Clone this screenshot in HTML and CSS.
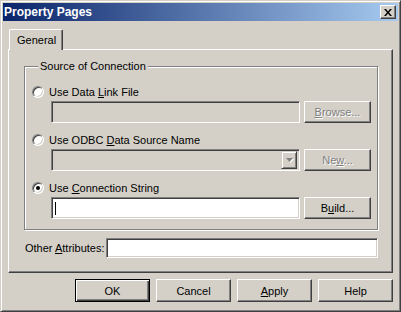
FILE: index.html
```html
<html>

<head>
    <link rel="stylesheet" href="styles.css">
    <title>Property Pages</title>
</head>

<body>
    <div class="window">
        <div class="titlebar">
            <span class="title">Property Pages</span>
            <div class="close">
                <svg width="8" height="7" viewBox="0 0 8 7">
                    <path d="M0 0h2l2 2.4 2-2.4h2l-3 3.5 3 3.5h-2l-2-2.4-2 2.4h-2l3-3.5z" fill="#000" />
                </svg>
            </div>
        </div>
        <div class="content">
            <div class="tabs">
                <div class="tab">General</div>
            </div>
            <div class="panel">
                <fieldset class="group">
                    <legend>Source of Connection</legend>
                    <div class="option">
                        <div class="radio-row">
                            <span class="radio"></span>
                            <span>Use Data <u>L</u>ink File</span>
                        </div>
                        <div class="field-row">
                            <div class="edit disabled"></div>
                            <div class="btn disabled"><span><u>B</u>rowse...</span></div>
                        </div>
                    </div>
                    <div class="option">
                        <div class="radio-row">
                            <span class="radio"></span>
                            <span>Use ODBC <u>D</u>ata Source Name</span>
                        </div>
                        <div class="field-row">
                            <div class="edit disabled combo">
                                <div class="drop">
                                    <svg width="9" height="6" viewBox="0 0 9 6">
                                        <path d="M2 2h7l-3.5 4z" fill="#fff" />
                                        <path d="M1 1h7l-3.5 4z" fill="#808080" />
                                    </svg>
                                </div>
                            </div>
                            <div class="btn disabled"><span>Ne<u>w</u>...</span></div>
                        </div>
                    </div>
                    <div class="option">
                        <div class="radio-row">
                            <span class="radio checked"></span>
                            <span>Use <u>C</u>onnection String</span>
                        </div>
                        <div class="field-row">
                            <div class="edit"><span class="caret"></span></div>
                            <div class="btn"><span>B<u>u</u>ild...</span></div>
                        </div>
                    </div>
                </fieldset>
                <div class="attr-row">
                    <span class="attr-label">Other <u>A</u>ttributes:</span>
                    <div class="edit attr-edit"></div>
                </div>
            </div>
            <div class="actions">
                <div class="btn wide default">OK</div>
                <div class="btn wide">Cancel</div>
                <div class="btn wide"><span><u>A</u>pply</span></div>
                <div class="btn wide">Help</div>
            </div>
        </div>
    </div>
</body>

</html>
```

FILE: styles.css
```css
* {
    box-sizing: border-box;
}

body {
    margin: 0;
    padding: 0;
    overflow: hidden;
    background-color: #d4d0c8;
    font-family: "Liberation Sans", Arial, sans-serif;
    font-size: 11px;
    color: #000;
    user-select: none;
}

u {
    text-decoration: underline;
    text-underline-offset: 1px;
}

.window {
    width: 401px;
    height: 312px;
    border: 1px solid;
    border-color: #d4d0c8 #404040 #404040 #d4d0c8;
    box-shadow: inset 1px 1px #fff, inset -1px -1px #808080;
    padding: 2px;
    background-color: #d4d0c8;
    display: flex;
    flex-direction: column;
}

.titlebar {
    height: 18px;
    background: linear-gradient(to right, #0a246a, #a6caf0);
    display: flex;
    align-items: center;
    justify-content: space-between;
    padding: 0 2px 0 1px;
}

.titlebar .title {
    color: #fff;
    font-weight: bold;
    font-size: 12px;
}

.close {
    width: 16px;
    height: 14px;
    background-color: #d4d0c8;
    border: 1px solid;
    border-color: #fff #404040 #404040 #fff;
    box-shadow: inset -1px -1px #808080;
    display: flex;
    align-items: center;
    justify-content: center;
    padding-right: 1px;
}

.content {
    flex: 1;
    padding: 8px 5px 0 5px;
    display: flex;
    flex-direction: column;
}

.tabs {
    display: flex;
    padding-left: 1px;
}

.tab {
    position: relative;
    z-index: 1;
    height: 21px;
    margin-bottom: -1px;
    padding: 0 6px 1px 7px;
    background-color: #d4d0c8;
    border-top: 1px solid #fff;
    border-left: 1px solid #fff;
    border-right: 1px solid #404040;
    border-top-left-radius: 2px;
    border-top-right-radius: 2px;
    box-shadow: inset -1px 0 #808080;
    display: flex;
    align-items: center;
}

.panel {
    height: 224px;
    border: 1px solid;
    border-color: #fff #404040 #404040 #fff;
    box-shadow: inset -1px -1px #808080;
    padding: 10px 14px 0 15px;
}

.group {
    margin: 0;
    padding: 10px 6px 10px 7px;
    min-width: 0;
    border: 1px solid #808080;
    box-shadow: 1px 1px #fff, inset 1px 1px #fff;
}

.group legend {
    padding: 0 2px;
    margin-left: 6px;
    line-height: 13px;
    background-color: #d4d0c8;
}

.option {
    display: flex;
    flex-direction: column;
}

.option + .option {
    margin-top: 8px;
}

.radio-row {
    height: 18px;
    display: flex;
    align-items: center;
    gap: 5px;
}

.radio {
    width: 12px;
    height: 12px;
    border-radius: 50%;
    border: 1px solid;
    border-color: #808080 #fff #fff #808080;
    box-shadow: inset 1px 1px #404040, inset -1px -1px #d4d0c8;
    background-color: #fff;
    display: flex;
    align-items: center;
    justify-content: center;
}

.radio.checked::after {
    content: "";
    width: 4px;
    height: 4px;
    border-radius: 50%;
    background-color: #000;
}

.field-row {
    display: flex;
    gap: 4px;
    margin-left: 19px;
}

.edit {
    width: 249px;
    height: 22px;
    border: 1px solid;
    border-color: #808080 #fff #fff #808080;
    box-shadow: inset 1px 1px #404040, inset -1px -1px #d4d0c8;
    background-color: #fff;
    display: flex;
    align-items: center;
    padding-left: 3px;
}

.edit.disabled {
    background-color: #d4d0c8;
}

.combo {
    justify-content: flex-end;
    padding: 2px;
}

.drop {
    width: 16px;
    height: 18px;
    border: 1px solid;
    border-color: #d4d0c8 #404040 #404040 #d4d0c8;
    box-shadow: inset 1px 1px #fff, inset -1px -1px #808080;
    display: flex;
    align-items: center;
    justify-content: center;
}

.caret {
    width: 1px;
    height: 13px;
    background-color: #000;
}

.btn {
    width: 67px;
    height: 22px;
    border: 1px solid;
    border-color: #fff #404040 #404040 #fff;
    box-shadow: inset -1px -1px #808080;
    background-color: #d4d0c8;
    display: flex;
    align-items: center;
    justify-content: center;
}

.btn.disabled {
    color: #808080;
    text-shadow: 1px 1px #fff;
}

.attr-row {
    display: flex;
    align-items: center;
    gap: 1px;
    margin-top: 8px;
    padding-left: 1px;
}

.attr-edit {
    flex: 1;
    width: auto;
    height: 20px;
}

.actions {
    display: flex;
    justify-content: flex-end;
    gap: 6px;
    margin-top: 6px;
}

.btn.wide {
    width: 75px;
    height: 23px;
}

.btn.default {
    border: 1px solid #000;
    box-shadow: inset 1px 1px #fff, inset -1px -1px #404040, inset -2px -2px #808080;
}
```
